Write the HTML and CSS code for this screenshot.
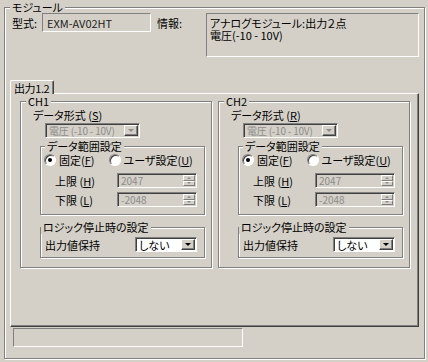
FILE: index.html
```html
<!DOCTYPE html>
<html lang="ja">
<head>
  <meta charset="UTF-8" />
  <title>モジュール設定</title>
  <link rel="stylesheet" href="styles.css">
</head>
<body>
  <fieldset class="group module">
    <legend>モジュール</legend>

    <div class="module-row">
      <span class="lbl">型式:</span>
      <div class="static model">EXM-AV02HT</div>
      <span class="lbl info-lbl">情報:</span>
      <div class="static info">アナログモジュール:出力２点<br>電圧(-10 - 10V)</div>
    </div>

    <div class="tabs">
      <div class="tab">出力1.2</div>
    </div>

    <div class="tab-panel">
      <div class="channels">
        <!-- CH1 -->
        <fieldset class="group ch">
          <legend>CH1</legend>
          <div class="field-lbl">データ形式 (<u>S</u>)</div>
          <div class="combo disabled">
            <span class="combo-text">電圧 (-10 - 10V)</span>
            <span class="drop"><i class="tri gray"></i></span>
          </div>

          <fieldset class="group range">
            <legend>データ範囲設定</legend>
            <div class="radios">
              <label class="opt"><span class="radio on"></span><span>固定(<u>F</u>)</span></label>
              <label class="opt user"><span class="radio"></span><span>ユーザ設定(<u>U</u>)</span></label>
            </div>
            <div class="limit">
              <span class="limit-lbl">上限 (<u>H</u>)</span>
              <div class="spin">
                <span class="spin-text">2047</span>
                <span class="spin-btns"><span class="sb"><i class="tri up"></i></span><span class="sb"><i class="tri"></i></span></span>
              </div>
            </div>
            <div class="limit">
              <span class="limit-lbl">下限 (<u>L</u>)</span>
              <div class="spin">
                <span class="spin-text">-2048</span>
                <span class="spin-btns"><span class="sb"><i class="tri up"></i></span><span class="sb"><i class="tri"></i></span></span>
              </div>
            </div>
          </fieldset>

          <fieldset class="group logic">
            <legend>ロジック停止時の設定</legend>
            <div class="hold">
              <span class="hold-lbl">出力値保持</span>
              <div class="combo select">
                <span class="combo-text">しない</span>
                <span class="drop"><i class="tri"></i></span>
              </div>
            </div>
          </fieldset>
        </fieldset>

        <!-- CH2 -->
        <fieldset class="group ch">
          <legend>CH2</legend>
          <div class="field-lbl">データ形式 (<u>R</u>)</div>
          <div class="combo disabled">
            <span class="combo-text">電圧 (-10 - 10V)</span>
            <span class="drop"><i class="tri gray"></i></span>
          </div>

          <fieldset class="group range">
            <legend>データ範囲設定</legend>
            <div class="radios">
              <label class="opt"><span class="radio on"></span><span>固定(<u>F</u>)</span></label>
              <label class="opt user"><span class="radio"></span><span>ユーザ設定(<u>U</u>)</span></label>
            </div>
            <div class="limit">
              <span class="limit-lbl">上限 (<u>H</u>)</span>
              <div class="spin">
                <span class="spin-text">2047</span>
                <span class="spin-btns"><span class="sb"><i class="tri up"></i></span><span class="sb"><i class="tri"></i></span></span>
              </div>
            </div>
            <div class="limit">
              <span class="limit-lbl">下限 (<u>L</u>)</span>
              <div class="spin">
                <span class="spin-text">-2048</span>
                <span class="spin-btns"><span class="sb"><i class="tri up"></i></span><span class="sb"><i class="tri"></i></span></span>
              </div>
            </div>
          </fieldset>

          <fieldset class="group logic">
            <legend>ロジック停止時の設定</legend>
            <div class="hold">
              <span class="hold-lbl">出力値保持</span>
              <div class="combo select">
                <span class="combo-text">しない</span>
                <span class="drop"><i class="tri"></i></span>
              </div>
            </div>
          </fieldset>
        </fieldset>
      </div>
    </div>

    <div class="status"></div>
  </fieldset>
</body>
</html>
```

FILE: styles.css
```css
body {
  margin: 0;
  width: 428px;
  height: 362px;
  overflow: hidden;
  background: #d4d0c8;
  color: #000;
  font-family: "Noto Sans CJK JP", sans-serif;
  font-size: 11px;
  line-height: 12px;
  font-feature-settings: "palt";
  white-space: nowrap;
}

u {
  text-decoration: underline;
  text-underline-offset: 1px;
}

/* etched group box */
.group {
  margin: 0;
  padding: 0;
  min-width: 0;
  border: 1px solid #808080;
  box-shadow: 1px 1px 0 #fff, inset 1px 1px 0 #fff;
}

.group legend {
  padding: 0 2px;
  line-height: 13px;
  background: #d4d0c8;
}

.module {
  margin: 1px 0 0 4px;
  width: 421px;
  box-sizing: border-box;
  padding: 0 5px 11px 5px;
}

.module > legend {
  margin-left: 0;
}

.module-row {
  display: flex;
  align-items: flex-start;
  height: 44px;
  margin-top: -1px;
}

.lbl {
  padding-top: 4px;
}

.module-row > .lbl:first-child {
  margin-left: 2px;
  width: 30px;
}

.static {
  box-sizing: border-box;
  border: 1px solid;
  border-color: #808080 #fff #fff #808080;
}

.model {
  width: 109px;
  height: 19px;
  padding: 3px 0 0 4px;
  color: #222;
}

.info-lbl {
  margin-left: 6px;
  width: 49px;
}

.info {
  width: 213px;
  height: 44px;
  padding: 3px 0 0 3px;
}

/* tab */
.tabs {
  display: flex;
  margin-top: 23px;
  height: 13px;
}

.tab {
  position: relative;
  z-index: 1;
  width: 44px;
  height: 14px;
  box-sizing: border-box;
  padding: 1px 0 0 3px;
  background: #d4d0c8;
  border-top: 1px solid #fff;
  border-left: 1px solid #fff;
  border-right: 1px solid #404040;
  border-radius: 2px 2px 0 0;
  box-shadow: inset -1px 0 0 #808080;
  letter-spacing: -0.4px;
}

.tab-panel {
  box-sizing: border-box;
  height: 234px;
  padding: 1px 0 0 9px;
  border-top: 1px solid #fff;
  border-left: 1px solid #fff;
  border-right: 1px solid #404040;
  border-bottom: 1px solid #404040;
  box-shadow: inset -1px -1px 0 #808080;
}

.channels {
  display: grid;
  grid-template-columns: 192px 192px;
  gap: 6px;
}

.ch {
  padding: 0 0 9px 0;
}

.ch > legend {
  margin-left: 5px;
}

.field-lbl {
  margin: 1px 0 0 12px;
}

/* combo boxes */
.combo {
  display: flex;
  box-sizing: border-box;
  height: 15px;
  border: 1px solid;
  border-color: #808080 #fff #fff #808080;
  box-shadow: inset 1px 1px 0 #404040;
}

.combo.disabled {
  width: 95px;
  margin: 2px 0 0 24px;
  color: #8c8c8c;
}

.combo-text {
  flex: 1;
  padding: 1px 0 0 3px;
  line-height: 12px;
}

.combo.disabled .combo-text {
  font-size: 10px;
  letter-spacing: -0.2px;
}

.drop {
  display: flex;
  align-items: center;
  justify-content: center;
  width: 12px;
  margin: 1px 1px 1px 0;
  background: #d4d0c8;
  border: 1px solid;
  border-color: #fff #404040 #404040 #fff;
  box-shadow: inset -1px -1px 0 #808080;
}

.tri {
  width: 0;
  height: 0;
  border-left: 3px solid transparent;
  border-right: 3px solid transparent;
  border-top: 3px solid #000;
}

.tri.gray {
  border-top-color: #8c8c8c;
}

.spin .tri {
  border-left-width: 2px;
  border-right-width: 2px;
  border-top: 2px solid #8c8c8c;
}

.spin .tri.up {
  border-top: 0;
  border-bottom: 2px solid #8c8c8c;
}

.range {
  margin: 2px 6px 0 19px;
  padding: 0 0 7px 0;
}

.range > legend {
  margin-left: 4px;
}

.radios {
  display: flex;
  height: 12px;
  margin: 1px 0 0 3px;
}

.opt {
  display: flex;
  align-items: center;
  gap: 3px;
}

.opt.user {
  margin-left: 14px;
}

.radio {
  position: relative;
  width: 12px;
  height: 12px;
  box-sizing: border-box;
  border-radius: 50%;
  background: #fff;
  border: 1px solid;
  border-color: #808080 #fff #fff #808080;
  box-shadow: inset 1px 1px 0 #404040;
}

.radio.on::after {
  content: "";
  position: absolute;
  left: 3px;
  top: 3px;
  width: 4px;
  height: 4px;
  border-radius: 50%;
  background: #000;
}

.limit {
  display: flex;
  align-items: center;
  margin-top: 4px;
}

.radios + .limit {
  margin-top: 7px;
}

.limit-lbl {
  width: 62px;
  margin-left: 14px;
}

.spin {
  display: flex;
  box-sizing: border-box;
  width: 80px;
  height: 15px;
  color: #8c8c8c;
  border: 1px solid;
  border-color: #808080 #fff #fff #808080;
  box-shadow: inset 1px 1px 0 #404040;
}

.spin-text {
  flex: 1;
  padding: 1px 0 0 3px;
  font-size: 10px;
}

.spin-btns {
  display: flex;
  flex-direction: column;
  width: 12px;
  margin: 1px 1px 1px 0;
}

.sb {
  flex: 1;
  display: flex;
  align-items: center;
  justify-content: center;
  background: #d4d0c8;
  border: 1px solid;
  border-color: #fff #808080 #808080 #fff;
}

.logic {
  margin: 6px 6px 0 19px;
  padding: 3px 0 5px 0;
}

.logic > legend {
  margin-left: 0;
}

.hold {
  display: flex;
  align-items: center;
}

.hold-lbl {
  width: 90px;
  margin-left: 4px;
}

.select {
  width: 62px;
  background: #fff;
}

.status {
  box-sizing: border-box;
  width: 230px;
  height: 19px;
  margin: 1px 0 0 3px;
  border: 1px solid;
  border-color: #808080 #fff #fff #808080;
}
```
